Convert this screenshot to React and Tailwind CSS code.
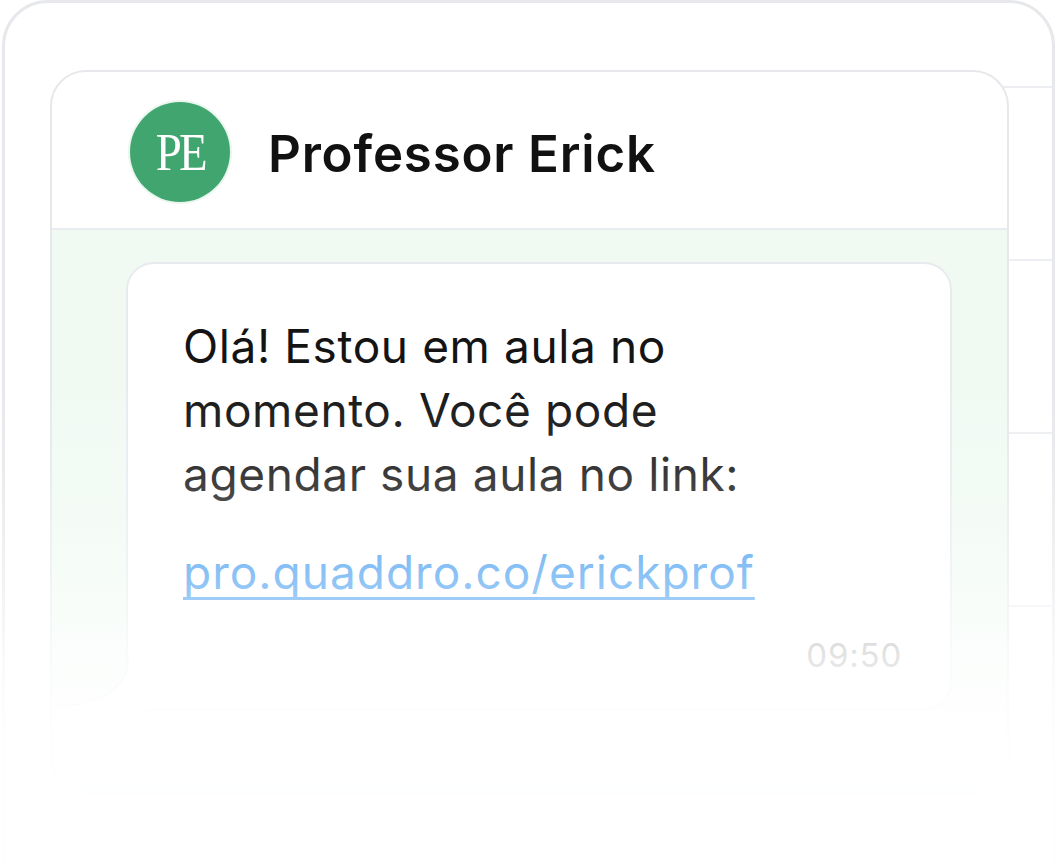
import React from "react";

// bubble tail at the bottom-left corner of the message
function BubbleTail() {
  return (
    <svg
      className="absolute left-[-76px] bottom-[-2px]"
      width="96"
      height="52"
      viewBox="0 0 96 52"
      fill="none"
    >
      <path d="M76 0 C 76 24, 60 44, 2 50 L 96 50 L 96 0 Z" fill="#ffffff" />
      <path d="M76 0 C 76 24, 60 44, 2 50" stroke="#e7ebef" strokeWidth="2" fill="none" />
    </svg>
  );
}

function Avatar() {
  return (
    <div className="w-[100px] h-[100px] rounded-full bg-[#41a56f] ring-2 ring-[#eaf7ef] flex items-center justify-center shrink-0">
      <span
        className="text-white text-[52px] leading-none tracking-[-3px] pt-[2px] scale-x-90"
        style={{ fontFamily: '"Liberation Serif", "DejaVu Serif", serif' }}
      >
        PE
      </span>
    </div>
  );
}

export default function App() {
  const rows = [0, 1, 2, 3];

  return (
    <div
      className="relative w-[1056px] h-[864px] overflow-hidden bg-white"
      style={{ fontFamily: 'Inter, "Noto Sans", "Liberation Sans", sans-serif' }}
    >
      {/* outer app frame */}
      <div className="ml-[2px] w-[1053px] h-[960px] border-[3px] border-[#e6e8eb] rounded-t-[46px] grid">
        {/* list rows showing behind the chat */}
        <div className="col-start-1 row-start-1 flex flex-col pt-[83px] ml-[950px]">
          {rows.map((r) => (
            <div key={r} className="h-[173px] border-t-2 border-[#eceef1]" />
          ))}
        </div>

        {/* chat window */}
        <div className="col-start-1 row-start-1 relative ml-[45px] mt-[67px] w-[959px] h-[724px] bg-white border-2 border-[#e6e8eb] rounded-[36px] overflow-hidden flex flex-col">
          <div className="h-[158px] shrink-0 flex items-center gap-[38px] pl-[78px] pt-[4px] border-b-2 border-[#e9ecee]">
            <Avatar />
            <h1 className="text-[51px] font-semibold tracking-[0.8px] text-[#111111] pt-[4px]">
              Professor Erick
            </h1>
          </div>

          <div className="flex-1 bg-[#f0faf3] pt-[32px] pl-[74px]">
            <div className="relative w-[826px] h-[448px] bg-white border-2 border-[#e7ebef] rounded-[28px] pl-[55px] pt-[50px] pr-[22px]">
              <p className="text-[46px] leading-[64px] text-[#141414] tracking-[0.6px]">
                Olá! Estou em aula no
                <br />
                momento. Você pode
                <br />
                agendar sua aula no link:
              </p>
              <a
                href="#"
                className="inline-block mt-[34px] text-[46px] leading-[64px] text-[#3193ee] underline decoration-[3px] underline-offset-[8px] [text-decoration-skip-ink:none] tracking-[1px]"
              >
                pro.quaddro.co/erickprof
              </a>
              <div className="flex justify-end pr-[26px] mt-[27px]">
                <span className="text-[33px] text-[#909090] tracking-[0.8px]">09:50</span>
              </div>
              <BubbleTail />
            </div>
          </div>
        </div>
      </div>

      {/* fade to white at the bottom */}
      <div className="pointer-events-none absolute inset-0 bg-[linear-gradient(to_bottom,rgba(255,255,255,0)_380px,rgba(255,255,255,0.15)_470px,rgba(255,255,255,0.45)_580px,rgba(255,255,255,0.75)_655px,rgba(255,255,255,0.93)_720px,rgba(255,255,255,0.97)_800px)]" />
    </div>
  );
}
